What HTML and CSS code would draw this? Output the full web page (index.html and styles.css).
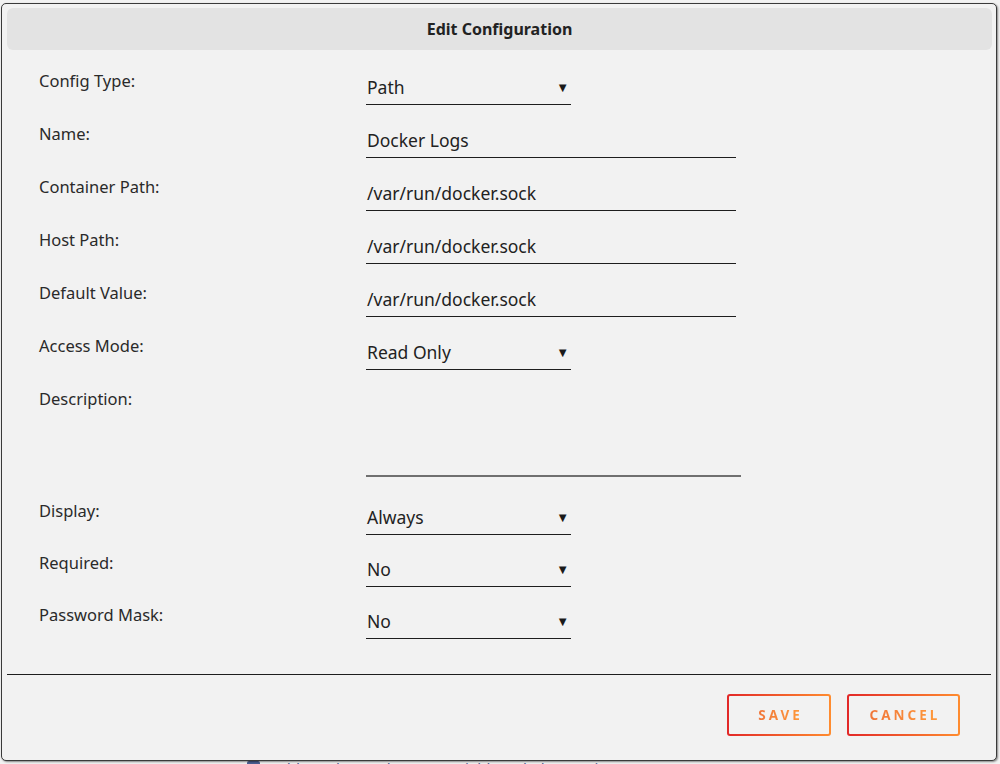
FILE: index.html
```html
<!DOCTYPE html>
<html>
<head>
<meta charset="utf-8">
<link rel="stylesheet" href="styles.css">
</head>
<body>
<div class="page">
  <div class="add-link">
    <span class="add-icon"></span>
    <span class="add-text">Add another Path, Port, Variable, Label or Device</span>
  </div>
</div>

<div class="dialog">
  <div class="dialog-header">Edit Configuration</div>
  <form class="form">
    <div class="row">
      <div class="label">Config Type:</div>
      <div class="field select"><span>Path</span><span class="arrow">▼</span></div>
    </div>
    <div class="row">
      <div class="label">Name:</div>
      <div class="field text"><span>Docker Logs</span></div>
    </div>
    <div class="row">
      <div class="label">Container Path:</div>
      <div class="field text"><span>/var/run/docker.sock</span></div>
    </div>
    <div class="row">
      <div class="label">Host Path:</div>
      <div class="field text"><span>/var/run/docker.sock</span></div>
    </div>
    <div class="row">
      <div class="label">Default Value:</div>
      <div class="field text"><span>/var/run/docker.sock</span></div>
    </div>
    <div class="row">
      <div class="label">Access Mode:</div>
      <div class="field select"><span>Read Only</span><span class="arrow">▼</span></div>
    </div>
    <div class="row row-desc">
      <div class="label">Description:</div>
      <div class="field textarea"></div>
    </div>
    <div class="row row-tight">
      <div class="label">Display:</div>
      <div class="field select"><span>Always</span><span class="arrow">▼</span></div>
    </div>
    <div class="row row-tight">
      <div class="label">Required:</div>
      <div class="field select"><span>No</span><span class="arrow">▼</span></div>
    </div>
    <div class="row row-tight">
      <div class="label">Password Mask:</div>
      <div class="field select"><span>No</span><span class="arrow">▼</span></div>
    </div>
  </form>
  <div class="dialog-footer">
    <button class="btn btn-save" type="button"><span>SAVE</span></button>
    <button class="btn btn-cancel" type="button"><span>CANCEL</span></button>
  </div>
</div>
</body>
</html>
```
FILE: styles.css
```css
* { box-sizing: border-box; }
html, body {
  margin: 0;
  padding: 0;
  background: #f2f2f2;
  font-family: "Noto Sans", "Open Sans", sans-serif;
  color: #2a2a2a;
  width: 1000px;
  height: 764px;
  overflow: hidden;
}
.page {
  padding-top: 761px;
  padding-left: 247px;
}
.add-link {
  display: flex;
  align-items: flex-start;
  gap: 12px;
  color: #4b5f93;
  font-size: 15px;
  line-height: 20px;
}
.add-icon {
  width: 13px;
  height: 13px;
  background: #4b5f93;
  border-radius: 2px;
}
.add-text { margin-top: -3px; }
.dialog {
  position: absolute;
  left: 1px;
  top: 3px;
  width: 996px;
  height: 758px;
  background: #f2f2f2;
  border: 1px solid #3a3a3a;
  border-radius: 5px;
  box-shadow: 1px 1px 2px rgba(0,0,0,0.45);
  padding: 4px 4px 0 4px;
  display: flex;
  flex-direction: column;
}
.dialog-header {
  height: 42px;
  background: #e3e3e3;
  border-radius: 6px;
  margin: 0 0 0 1px;
  display: flex;
  align-items: center;
  justify-content: center;
  font-weight: 700;
  font-size: 16px;
  color: #222;
}
.form {
  margin: 20px 0 0 0;
  padding-left: 33px;
  display: flex;
  flex-direction: column;
}
.row {
  display: grid;
  grid-template-columns: 327px 1fr;
  height: 53px;
}
.row-tight { height: 52px; }
.row-desc { height: 112px; }
.label {
  font-size: 16.5px;
  line-height: 22px;
  color: #2a2a2a;
}
.field {
  height: 35px;
  border-bottom: 1px solid #1e1e1e;
  display: flex;
  align-items: center;
  justify-content: space-between;
  font-size: 17.5px;
  color: #222;
  padding-left: 1px;
}
.select { width: 205px; }
.text { width: 370px; }
.textarea {
  width: 375px;
  height: 89px;
  border-bottom: 2px solid #707070;
}
.arrow {
  font-size: 13px;
  margin-right: 2px;
  color: #1a1a1a;
}
.dialog-footer {
  margin-top: auto;
  margin-bottom: 24px;
  border-top: 1px solid #1e1e1e;
  margin-left: 1px;
  margin-right: 1px;
  padding: 19px 31px 0 0;
  display: flex;
  justify-content: flex-end;
  gap: 16px;
}
.btn {
  height: 42px;
  border: 2px solid transparent;
  border-radius: 3px;
  background: linear-gradient(#f2f2f2, #f2f2f2) padding-box,
              linear-gradient(90deg, #e22828, #ff8c2f) border-box;
  font-family: "Noto Sans", "Open Sans", sans-serif;
  font-weight: 700;
  font-size: 13.5px;
  letter-spacing: 3px;
  cursor: pointer;
}
.btn-save { width: 104px; padding: 0 0 0 3px; }
.btn-cancel { width: 113px; padding: 0 0 0 3px; }
.btn span {
  background: linear-gradient(90deg, #f0763a, #ff9a3a);
  -webkit-background-clip: text;
  background-clip: text;
  color: transparent;
}
```
